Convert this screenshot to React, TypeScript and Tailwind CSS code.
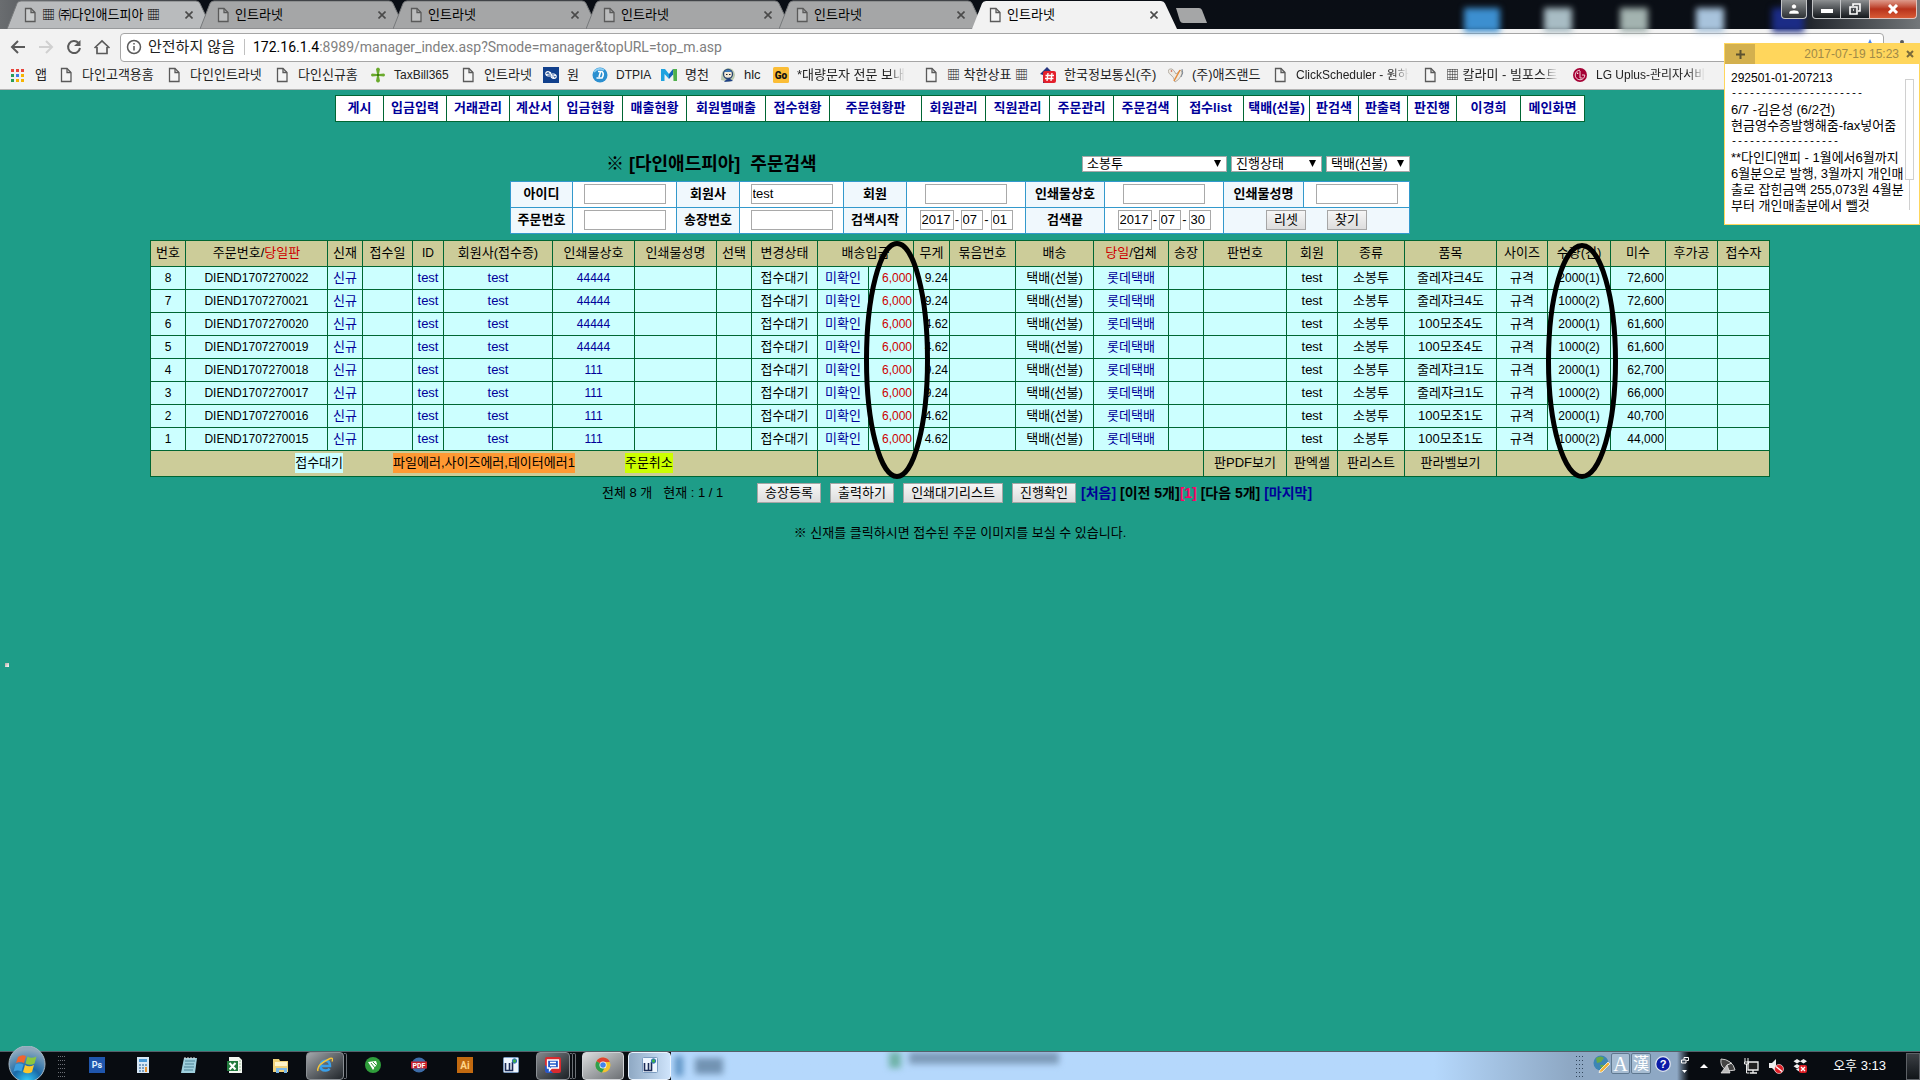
import { FunctionComponent, ReactNode } from "react";

const tabs = ["▦ ㈜다인애드피아 ▦", "인트라넷", "인트라넷", "인트라넷", "인트라넷", "인트라넷"];

const bookmarks = [
    { icon: "apps", label: "앱", width: 47 },
    { icon: "doc", label: "다인고객용홈", width: 108 },
    { icon: "doc", label: "다인인트라넷", width: 108 },
    { icon: "doc", label: "다인신규홈", width: 96 },
    { icon: "plus", label: "TaxBill365", width: 90, latin: true },
    { icon: "doc", label: "인트라넷", width: 83 },
    { icon: "wave", label: "원", width: 49 },
    { icon: "dtpia", label: "DTPIA", width: 69, latin: true },
    { icon: "m", label: "명천", width: 59 },
    { icon: "hlc", label: "hlc", width: 53 },
    { icon: "go", label: "*대량문자 전문 보내", width: 150, fade: true },
    { icon: "doc", label: "▦ 착한상표 ▦", width: 117 },
    { icon: "hash", label: "한국정보통신(주)", width: 128 },
    { icon: "bird", label: "(주)애즈랜드", width: 104 },
    { icon: "doc", label: "ClickScheduler - 원하", width: 150, latin: true, fade: true },
    { icon: "doc", label: "▦ 칼라미 - 빌포스트", width: 150, fade: true },
    { icon: "lg", label: "LG Uplus-관리자서비", width: 150, latin: true, fade: true },
];

const menus = [
    { label: "게시", width: 48 },
    { label: "입금입력", width: 63 },
    { label: "거래관리", width: 63 },
    { label: "계산서", width: 49 },
    { label: "입금현황", width: 64 },
    { label: "매출현황", width: 64 },
    { label: "회원별매출", width: 79 },
    { label: "접수현황", width: 64 },
    { label: "주문현황판", width: 92 },
    { label: "회원관리", width: 64 },
    { label: "직원관리", width: 64 },
    { label: "주문관리", width: 64 },
    { label: "주문검색", width: 64 },
    { label: "접수list", width: 66 },
    { label: "택배(선불)", width: 66 },
    { label: "판검색", width: 49 },
    { label: "판출력", width: 49 },
    { label: "판진행", width: 49 },
    { label: "이경희", width: 64 },
    { label: "메인화면", width: 64 },
];

const columns = [35, 142, 35, 50, 31, 109, 82, 82, 35, 66, 51, 45, 36, 66, 78, 75, 35, 83, 51, 67, 92, 51, 63, 55, 52, 52];
const searchColumns = [62, 104, 63, 104, 63, 119, 79, 119, 80, 106];

const orders = [
    { no: 8, code: "DIEND1707270022", name: "44444", weight: "9.24", item: "줄레쟈크4도", qty: "2000(1)", due: "72,600" },
    { no: 7, code: "DIEND1707270021", name: "44444", weight: "9.24", item: "줄레쟈크4도", qty: "1000(2)", due: "72,600" },
    { no: 6, code: "DIEND1707270020", name: "44444", weight: "4.62", item: "100모조4도", qty: "2000(1)", due: "61,600" },
    { no: 5, code: "DIEND1707270019", name: "44444", weight: "4.62", item: "100모조4도", qty: "1000(2)", due: "61,600" },
    { no: 4, code: "DIEND1707270018", name: "111", weight: "9.24", item: "줄레쟈크1도", qty: "2000(1)", due: "62,700" },
    { no: 3, code: "DIEND1707270017", name: "111", weight: "9.24", item: "줄레쟈크1도", qty: "1000(2)", due: "66,000" },
    { no: 2, code: "DIEND1707270016", name: "111", weight: "4.62", item: "100모조1도", qty: "2000(1)", due: "40,700" },
    { no: 1, code: "DIEND1707270015", name: "111", weight: "4.62", item: "100모조1도", qty: "1000(2)", due: "44,000" },
];

const DocIcon: FunctionComponent = () => (
    <svg viewBox="0 0 16 16" className="h-4 w-4 shrink-0" fill="#fff" fillOpacity=".25" stroke="#5a5a5a" strokeWidth="1.3">
        <path d="M3.5 1.5h5.5l4 4v9h-9.500z" />
        <path d="M9 1.500v4h4" fill="none" />
    </svg>
);

const BookmarkIcon: FunctionComponent<{ name: string }> = ({ name }) => {
    if (name === "doc") return <DocIcon />;
    return (
        <svg viewBox="0 0 16 16" className="h-4 w-4 shrink-0">
            {name === "apps" && (
                <g>
                    <path d="M0 2h3v3H0zM5 2h3v3H5zM10 2h3v3h-3z" fill="#e8453c" />
                    <path d="M0 7h3v3H0zM0 12h3v3H0z" fill="#2a9d57" />
                    <path d="M5 7h3v3H5z" fill="#3f7de8" />
                    <path d="M5 12h3v3H5zM10 7h3v3h-3zM10 12h3v3h-3z" fill="#f6b400" />
                </g>
            )}
            {name === "plus" && (
                <g fill="#6aaa2c">
                    <path d="M7 7L6 2Q8-1 10 2L9 7zM7 9l-1 5q2 3 4 0L9 9z" />
                    <path d="M7 7L2 6.500Q0 8 2 9.500L7 9zM9 7l5-.5q2 1.500 0 3L9 9z" />
                    <path d="M7 7h2v2H7z" fill="#3a7a14" />
                </g>
            )}
            {name === "wave" && (
                <g fill="none" stroke="#fff" strokeWidth="1.100">
                    <path d="M0 0h16v16H0z" fill="#11408c" stroke="none" />
                    <path d="M8 6Q5 3.500 3 5.500q-1 2.500 2 3.500h4q3 0 4-1M8 10q3 2.500 5 .5 1-2.500-2-3.500H7Q4 7 3 8M6 5l5 6" />
                </g>
            )}
            {name === "dtpia" && (
                <g>
                    <circle cx="8" cy="8" r="7.500" fill="#2b8fd0" />
                    <path d="M2 5q4-5 10-2" stroke="#8fd0f5" strokeWidth="1.500" fill="none" />
                    <path d="M6 4.500h4q2.500 2.500 0 6.500H4.500M8.500 5L7 10" stroke="#fff" strokeWidth="1.600" fill="none" />
                </g>
            )}
            {name === "m" && (
                <g>
                    <path d="M0 14V2h4l4 5v5L3.500 7v7z" fill="#1fa3e0" />
                    <path d="M8 7l4-5v5.500L8 12z" fill="#1463b8" />
                    <path d="M12 2h4v12h-3.500z" fill="#4fb04b" />
                </g>
            )}
            {name === "hlc" && (
                <g>
                    <path d="M1 13Q1 2 8 1q6 0 7 7-1 6-6 7z" fill="#b9c8b0" />
                    <circle cx="8" cy="7" r="4.500" fill="#f3ead8" stroke="#29446e" strokeWidth="1.300" />
                    <path d="M4 5q4-5 8 0z" fill="#3c7ab8" />
                    <path d="M4 15q4-6 9-1z" fill="#1d3f86" />
                    <path d="M6 7.500h1.500M9 7.500h1.500" stroke="#222" />
                </g>
            )}
            {name === "go" && (
                <g>
                    <rect width="16" height="16" rx="1.500" fill="#fbbd36" />
                    <text x="8" y="11.500" textAnchor="middle" fontSize="10" fontWeight="900" fontFamily="Roboto, sans-serif" fill="#111">Go</text>
                </g>
            )}
            {name === "hash" && (
                <g>
                    <path d="M0 7l7-7 5 5v11H3V8z" fill="#27357e" />
                    <rect x="3" y="4" width="13" height="12" rx="2" fill="#e3202c" />
                    <path d="M8 6L7 14M12 6l-1 8M5.500 8.500h8.500M5 11.500h8.500" stroke="#fff" strokeWidth="1.300" />
                </g>
            )}
            {name === "bird" && (
                <g fill="none">
                    <path d="M0 4q1-3 4-2 2 1 4 5l5-4q2 3 0 6-2 4-6 6-1-5-4-7-2-1-3-4z" fill="#eeeae2" stroke="#b5aea4" />
                    <path d="M6 14l6-11" stroke="#e58a3a" strokeWidth="1.500" />
                    <path d="M14 2q2 4-1 8" stroke="#7f8a96" />
                    <circle cx="3.500" cy="4" r=".8" fill="#c8452e" />
                </g>
            )}
            {name === "lg" && (
                <g>
                    <circle cx="8" cy="8" r="7" fill="#a50034" />
                    <path d="M8 4v7h2.500M8 3.200a4.800 4.800 0 1 0 4.800 4.800H10" stroke="#f3cfd9" fill="none" />
                    <circle cx="5.600" cy="6.300" r=".8" fill="#fff" />
                </g>
            )}
        </svg>
    );
};

const Tab: FunctionComponent<{ label: string; index: number }> = ({ label, index }) => {
    const active = index === 5;
    const fill = active ? "#f2f2f2" : index === 0 ? "#b9bbbd" : "#a5a6a7";
    return (
        <div className={active ? "relative z-10 h-full w-[193px]" : "relative h-full w-[193px]"}>
            <svg viewBox="0 0 206 29" className="absolute left-0 top-0 h-[29px] w-[206px]">
                <path d="M0 29L10 3.500Q11 1 14 1h175q3 0 4 2.500L205 29z" fill={fill} stroke={active ? "none" : "#77797b"} />
            </svg>
            <div className="relative flex h-full items-center pl-[15px]">
                <DocIcon />
                <span className="ml-1 w-[139px] whitespace-nowrap text-[13px] leading-4 text-black">{label}</span>
                <button aria-label="닫기" className="ml-1 h-2 w-2">
                    <svg viewBox="0 0 8 8" className="h-2 w-2" stroke="#4a4a4a" strokeWidth="1.600"><path d="M.5.500l7 7M7.500.500l-7 7" /></svg>
                </button>
            </div>
        </div>
    );
};

const BrowserHeader: FunctionComponent = () => (
    <header className="relative h-[90px] overflow-hidden border-b border-[#b4b4b4] bg-[#f2f2f2]">
        <div className="relative flex h-[29px] bg-linear-to-r from-[#6a6d70] via-[#0a0e15] via-10% to-[#0a0e15] pl-[7px]">
            <div className="absolute right-0 top-0 h-full w-36 bg-linear-to-r from-transparent to-[#73777a]"></div>
            <div className="absolute right-[116px] top-2 flex gap-x-12 blur-[3px]">
                <div className="-mr-1 h-6 w-9 bg-[#3c8fd0]"></div>
                <div className="h-6 w-7 bg-[#a8bcc4]"></div>
                <div className="h-6 w-7 bg-[#a3b3b0]"></div>
                <div className="h-6 w-7 bg-[#a8c3dc]"></div>
                <div className="h-6 w-8 bg-[#1b2c86]"></div>
            </div>
            {tabs.map((label, i) => <Tab key={i} label={label} index={i} />)}
            <button aria-label="새 탭" className="relative z-10 ml-[10px] mt-2 h-[15px] w-8">
                <svg viewBox="0 0 32 15" className="h-[15px] w-8"><path d="M1 0h23q2 0 3 2l5 13H8q-2 0-3-2z" fill="#a5a6a7" /></svg>
            </button>
            <div className="absolute right-[3px] top-0 flex h-[19px]">
                <button aria-label="사용자" className="mr-[5px] flex w-[26px] items-center justify-center rounded-b border border-t-0 border-[#c3c5c7] bg-linear-to-b from-[#8d9092] to-[#2e3236]">
                    <svg viewBox="0 0 12 12" className="h-3 w-3" fill="#fff" stroke="#333" strokeWidth=".5"><circle cx="6" cy="3.500" r="2.500" /><path d="M1 11V9q1-2 5-2t5 2v2z" /></svg>
                </button>
                <button aria-label="최소화" className="flex w-[29px] items-center justify-center rounded-bl border border-t-0 border-[#c3c5c7] bg-linear-to-b from-[#8d9092] to-[#15191d]">
                    <span className="mt-1 h-1 w-3 bg-white"></span>
                </button>
                <button aria-label="이전 크기로" className="flex w-[28px] items-center justify-center border-b border-[#c3c5c7] bg-linear-to-b from-[#8d9092] to-[#15191d]">
                    <svg viewBox="0 0 12 12" className="h-3 w-3" fill="none" stroke="#fff" strokeWidth="1.600"><path d="M4 3V1h7v7H9M1 4h7v7H1zM4 7h1" /></svg>
                </button>
                <button aria-label="닫기" className="flex w-[48px] items-center justify-center rounded-br border border-t-0 border-[#e0c3bd] bg-linear-to-b from-[#dd9a8b] via-[#b8321b] to-[#d85a35]">
                    <svg viewBox="0 0 12 10" className="h-[10px] w-3" stroke="#fff" strokeWidth="3"><path d="M2 1l8 8M10 1L2 9" /></svg>
                </button>
            </div>
        </div>
        <div className="flex h-[36px] items-center pl-[10px] pr-2">
            <svg viewBox="0 0 102 18" className="h-[18px] w-[102px] shrink-0" fill="none" stroke="#5a5a5a" strokeWidth="2">
                <path d="M15 9H2M8 3L2 9l6 6" />
                <path d="M29 9h13M36 3l6 6-6 6" stroke="#d0d0d0" />
                <path d="M68.500 5A6 6 0 1 0 70 10" />
                <path d="M70.500 2v6H64z" fill="#5a5a5a" stroke="none" />
                <path d="M84.500 10L92 3l7.500 7M87 9v6.500h10V9" strokeWidth="1.700" />
            </svg>
            <div className="ml-2 flex h-[29px] flex-1 items-center rounded-sm border border-[#a6a6a6] bg-white pl-[5px]">
                <svg viewBox="0 0 16 16" className="h-4 w-4" fill="none" stroke="#5a5a5a" strokeWidth="1.500"><circle cx="8" cy="8" r="6.500" /><path d="M8 7v4.500M8 4v1.500" /></svg>
                <span className="ml-[6px] w-[91px] whitespace-nowrap text-[15px] leading-5 text-[#222]">안전하지 않음</span>
                <span className="ml-[5px] h-4 w-px bg-[#c0c0c0]"></span>
                <p className="ml-2 whitespace-nowrap font-[Roboto,sans-serif] text-[14px] leading-5 text-[#808080]"><span className="text-black">172.16.1.4</span>:8989/manager_index.asp?Smode=manager&amp;topURL=top_m.asp</p>
                <svg viewBox="0 0 16 16" className="ml-auto mr-[5px] h-4 w-4" fill="#4a86e8"><path d="M8 0l2.500 5.500 5.500.5-4 4 1 6-5-3-5 3 1-6-4-4 5.500-.5z" /></svg>
            </div>
            <svg viewBox="0 0 4 14" className="ml-4 mr-2 h-[14px] w-1" fill="#5a5a5a"><circle cx="2" cy="2" r="2" /><circle cx="2" cy="7" r="2" /><circle cx="2" cy="12" r="2" /></svg>
        </div>
        <nav className="flex h-5 items-center pl-[11px]">
            {bookmarks.map((b, i) => (
                <a key={i} href="#" style={{ width: b.width }} className="flex shrink-0 items-center gap-x-2 text-[#222]">
                    <BookmarkIcon name={b.icon} />
                    <span className={"whitespace-nowrap leading-4 " + (b.latin ? "text-[12px] " : "text-[13px] ") + (b.fade ? "mask-r-from-85%" : "")}>{b.label}</span>
                </a>
            ))}
        </nav>
    </header>
);

const Th: FunctionComponent<{ children?: ReactNode; span?: number }> = ({ children, span }) => (
    <th colSpan={span} className="whitespace-nowrap border border-[#006633] pb-[2px] font-normal">{children}</th>
);

const Td: FunctionComponent<{ children?: ReactNode; className?: string }> = ({ children, className }) => (
    <td className={"whitespace-nowrap border border-[#006633] " + (className || "")}>{children}</td>
);

const Select: FunctionComponent<{ label: string; value: string; className: string }> = ({ label, value, className }) => (
    <div className={"relative h-4 " + className}>
        <select aria-label={label} className="block h-4 w-full appearance-none border border-[#a9a9a9] bg-white pl-1 text-[13px] leading-[14px]">
            <option>{value}</option>
        </select>
        <svg viewBox="0 0 7 7" className="pointer-events-none absolute right-[6px] top-1 h-[7px] w-[7px]"><path d="M0 0h7L3.500 7z" /></svg>
    </div>
);

const Field: FunctionComponent<{ id: string; label: string; value?: string }> = ({ id, label, value }) => (
    <>
        <th className="border border-[#3399cc] bg-[#f0f8fd] pb-[2px] font-bold"><label htmlFor={id}>{label}</label></th>
        <td className="border border-[#3399cc] bg-white pb-[2px]">
            <input id={id} defaultValue={value} className="mx-auto block h-5 w-[82px] border border-[#a9a9a9] bg-white px-px text-[13px]" />
        </td>
    </>
);

const DateField: FunctionComponent<{ id: string; label: string; day: string }> = ({ id, label, day }) => (
    <>
        <th className="border border-[#3399cc] bg-[#f0f8fd] pb-[2px] font-bold"><label htmlFor={id}>{label}</label></th>
        <td className="border border-[#3399cc] bg-white pb-[2px]">
            <div className="flex items-center justify-center text-[13px]">
                <input id={id} defaultValue="2017" className="h-5 w-[34px] border border-[#a9a9a9] px-px" />
                <span className="w-[7px] text-center">-</span>
                <input aria-label="월" defaultValue="07" className="h-5 w-[22px] border border-[#a9a9a9] px-px" />
                <span className="w-[8px] text-center">-</span>
                <input aria-label="일" defaultValue={day} className="h-5 w-[22px] border border-[#a9a9a9] px-px" />
            </div>
        </td>
    </>
);

const Button: FunctionComponent<{ children: ReactNode; className: string }> = ({ children, className }) => (
    <button className={"h-5 whitespace-nowrap border border-[#a6a6a6] bg-linear-to-b from-[#f6f6f6] to-[#dddddd] text-[13px] leading-4 text-black " + className}>{children}</button>
);

const SearchForm: FunctionComponent = () => (
    <form className="mx-auto mt-[34px] w-[900px]">
        <div className="flex h-4 items-center">
            <h1 className="ml-[96px] whitespace-pre text-[18px] font-bold leading-5">※ [다인애드피아]  주문검색</h1>
            <div className="ml-auto flex gap-x-1">
                <Select label="종류" value="소봉투" className="w-[145px]" />
                <Select label="진행상태" value="진행상태" className="w-[91px]" />
                <Select label="배송" value="택배(선불)" className="w-[84px]" />
            </div>
        </div>
        <table className="mt-[9px] w-[900px] table-fixed border-collapse text-[13px] leading-4">
            <colgroup>{searchColumns.map((w, i) => <col key={i} style={{ width: w }} />)}</colgroup>
            <tbody>
                <tr className="h-[26px]">
                    <Field id="uid" label="아이디" />
                    <Field id="company" label="회원사" value="test" />
                    <Field id="member" label="회원" />
                    <Field id="shop" label="인쇄물상호" />
                    <Field id="person" label="인쇄물성명" />
                </tr>
                <tr className="h-[26px]">
                    <Field id="orderNo" label="주문번호" />
                    <Field id="invoice" label="송장번호" />
                    <DateField id="from" label="검색시작" day="01" />
                    <DateField id="to" label="검색끝" day="30" />
                    <td colSpan={2} className="border border-[#3399cc] bg-[#f0f8fd] pb-[2px]">
                        <div className="flex justify-center gap-x-[21px]">
                            <Button className="w-10">리셋</Button>
                            <Button className="w-10">찾기</Button>
                        </div>
                    </td>
                </tr>
            </tbody>
        </table>
    </form>
);

const OrderTable: FunctionComponent = () => (
    <div className="relative mx-auto mt-[6px] w-[1620px]">
        <table className="w-full table-fixed border-collapse bg-[#cccc99] text-center text-[13px] leading-4">
            <colgroup>{columns.map((w, i) => <col key={i} style={{ width: w }} />)}</colgroup>
            <thead>
                <tr className="h-[26px]">
                    <Th>번호</Th>
                    <Th>주문번호/<span className="text-[#cc0000]">당일판</span></Th>
                    <Th>신재</Th>
                    <Th>접수일</Th>
                    <Th><span className="text-[12px]">ID</span></Th>
                    <Th>회원사(접수증)</Th>
                    <Th>인쇄물상호</Th>
                    <Th>인쇄물성명</Th>
                    <Th>선택</Th>
                    <Th>변경상태</Th>
                    <Th span={2}>배송입금</Th>
                    <Th>무게</Th>
                    <Th>묶음번호</Th>
                    <Th>배송</Th>
                    <Th><span className="text-[#cc0000]">당일</span>/업체</Th>
                    <Th>송장</Th>
                    <Th>판번호</Th>
                    <Th>회원</Th>
                    <Th>종류</Th>
                    <Th>품목</Th>
                    <Th>사이즈</Th>
                    <Th>수량(건)</Th>
                    <Th>미수</Th>
                    <Th>후가공</Th>
                    <Th>접수자</Th>
                </tr>
            </thead>
            <tbody className="bg-[#ccffff]">
                {orders.map((o) => (
                    <tr key={o.no} className="h-[23px]">
                        <Td className="text-[12px]">{o.no}</Td>
                        <Td className="text-[12px]">{o.code}</Td>
                        <Td className="text-[#000099]"><a href="#">신규</a></Td>
                        <Td />
                        <Td className="text-[#000099]"><a href="#">test</a></Td>
                        <Td className="text-[#000099]"><a href="#">test</a></Td>
                        <Td className="text-[12px] text-[#000099]"><a href="#">{o.name}</a></Td>
                        <Td />
                        <Td />
                        <Td>접수대기</Td>
                        <Td className="text-[#000099]"><a href="#">미확인</a></Td>
                        <Td className="pr-px text-right text-[12px] text-[#cc0000]">6,000</Td>
                        <Td className="pr-px text-right text-[12px]">{o.weight}</Td>
                        <Td />
                        <Td>택배(선불)</Td>
                        <Td className="text-[#000099]"><a href="#">롯데택배</a></Td>
                        <Td />
                        <Td />
                        <Td>test</Td>
                        <Td>소봉투</Td>
                        <Td>{o.item}</Td>
                        <Td>규격</Td>
                        <Td className="text-[12px]">{o.qty}</Td>
                        <Td className="pr-px text-right text-[12px]">{o.due}</Td>
                        <Td />
                        <Td />
                    </tr>
                ))}
            </tbody>
            <tfoot>
                <tr className="h-[26px]">
                    <td colSpan={10} className="border border-[#006633] pb-[2px]">
                        <div className="flex justify-center gap-x-[50px] leading-5">
                            <span className="bg-[#ccffff]">접수대기</span>
                            <span className="bg-[#ff9933]">파일에러,사이즈에러,데이터에러1</span>
                            <span className="bg-[#ccff00]">주문취소</span>
                        </div>
                    </td>
                    <td colSpan={7} className="border border-[#006633]"></td>
                    <Td className="pb-[2px]">판PDF보기</Td>
                    <Td className="pb-[2px]">판엑셀</Td>
                    <Td className="pb-[2px]">판리스트</Td>
                    <Td className="pb-[2px]">판라벨보기</Td>
                    <td colSpan={5} className="border border-[#006633]"></td>
                </tr>
            </tfoot>
        </table>
        {/* pen marks over 배송입금 and 수량 */}
        <svg viewBox="0 0 66 238" className="pointer-events-none absolute left-[714px] top-px h-[238px] w-[66px]">
            <ellipse cx="33" cy="119" rx="30.500" ry="116.500" fill="none" stroke="#000" strokeWidth="5" />
        </svg>
        <svg viewBox="0 0 72 236" className="pointer-events-none absolute left-[1396px] top-[3px] h-[236px] w-[72px]">
            <ellipse cx="36" cy="118" rx="33.500" ry="115.500" fill="none" stroke="#000" strokeWidth="5" />
        </svg>
    </div>
);

const Memo: FunctionComponent = () => (
    <aside className="absolute right-0 top-[43px] z-20 h-[182px] w-[196px] border border-[#ffd65c] bg-white text-black">
        <div className="flex h-5 items-center bg-[#ffd65c]">
            <button aria-label="새 메모" className="flex h-5 w-[30px] items-center justify-center bg-[#d3b04e]">
                <svg viewBox="0 0 9 9" className="h-[9px] w-[9px]" stroke="#5d5230" strokeWidth="2"><path d="M4.500 0v9M0 4.500h9" /></svg>
            </button>
            <span className="ml-auto text-[12px] leading-4 text-[#a08a48]">2017-07-19 15:23</span>
            <button aria-label="닫기" className="ml-[7px] mr-[5px] h-2 w-2">
                <svg viewBox="0 0 8 8" className="h-2 w-2" stroke="#7a6a3a" strokeWidth="2"><path d="M1 1l6 6M7 1L1 7" /></svg>
            </button>
        </div>
        <div className="whitespace-pre pl-[6px] pt-[6px] text-[13px] leading-4">
            <p className="text-[12px] leading-4">292501-01-207213</p>
            <p className="font-['Liberation_Mono',monospace] text-[10px] leading-4">----------------------</p>
            <p>6/7 -김은성 (6/2건)</p>
            <p>현금영수증발행해줌-fax넣어줌</p>
            <p className="font-['Liberation_Mono',monospace] text-[10px] leading-4">------------------</p>
            <p>**다인디앤피 - 1월에서6월까지</p>
            <p>6월분으로 발행, 3월까지 개인매</p>
            <p>출로 잡힌금액 255,073원 4월분</p>
            <p>부터 개인매출분에서 뺄것</p>
        </div>
        <div className="absolute right-[5px] top-[35px] h-[101px] w-[9px] border border-[#d0d0d0]"></div>
        <div className="absolute right-[9px] top-[136px] h-[30px] w-px bg-[#d0d0d0]"></div>
    </aside>
);

const TaskIcon: FunctionComponent<{ children: ReactNode; className?: string }> = ({ children, className }) => (
    <button aria-label="프로그램" className={"flex h-[28px] shrink-0 items-center justify-center pb-[2px] " + (className || "w-[46px]")}>
        <svg viewBox="0 0 16 16" className="h-4 w-4">{children}</svg>
    </button>
);

const UiGlyph: FunctionComponent = () => (
    <g>
        <rect x=".5" y=".5" width="15" height="15" rx="1" fill="#eef6ff" stroke="#7c9cc0" />
        <path d="M2.500 6v7.500h4V6M6.500 13.500h3V5" fill="none" stroke="#1b2b55" strokeWidth="1.600" />
        <circle cx="11.500" cy="4" r="2.200" fill="#3fae49" stroke="#2d6bc4" />
    </g>
);

const Taskbar: FunctionComponent = () => (
    <footer className="relative flex h-[29px] items-center border-t border-[#55606a] bg-[#080c11]">
        <button aria-label="시작" className="absolute -top-[6px] left-2 h-[35px] w-[38px]">
            <svg viewBox="0 0 38 35" className="h-[35px] w-[38px]">
                <defs>
                    <radialGradient id="orb" cx=".5" cy="1" r=".9">
                        <stop offset="0" stopColor="#35d2ff" />
                        <stop offset=".45" stopColor="#1a69a8" />
                        <stop offset="1" stopColor="#8ea9bd" />
                    </radialGradient>
                </defs>
                <circle cx="19" cy="18" r="18" fill="url(#orb)" stroke="#a7b8c4" />
                <path d="M10 11q4-3 8-1l-2 7q-4-2-8 0z" fill="#f0652f" />
                <path d="M19.500 10.500q4 2.500 9 0l-2 7q-4 2.500-9 0z" fill="#8cc63f" />
                <path d="M7.500 18.500q4-2 8 0l-2 7q-4-2-8 0z" fill="#3d9fe0" />
                <path d="M17 19q4 2.500 9 0l-2 7q-4 2.500-9 0z" fill="#fcc62c" />
            </svg>
        </button>
        <svg viewBox="0 0 8 21" className="ml-[58px] h-[21px] w-2" fill="#6c7076">
            {[0, 4, 8, 12, 16, 20].map((y) => <path key={y} d={`M0 ${y}h1v1H0zM2 ${y}h1v1H2zM4 ${y}h1v1H4zM6 ${y}h1v1H6z`} />)}
        </svg>
        <div className="ml-[8px] flex h-full items-center">
            <TaskIcon>
                <rect width="16" height="16" fill="#1f56ad" /><text x="8" y="11" textAnchor="middle" fontSize="9" fontWeight="700" fontFamily="Roboto, sans-serif" fill="#dff0ff">Ps</text>
            </TaskIcon>
            <TaskIcon>
                <path d="M2 0h12v16H2z" fill="#d7e7f5" /><path d="M4 2h8v3H4z" fill="#4a9ad8" /><path d="M4 7h2v2H4zM7 7h2v2H7zM10 7h2v2h-2zM4 10h2v2H4zM7 10h2v2H7zM4 13h2v2H4zM7 13h2v2H7z" fill="#7b9fc0" /><path d="M10 10h2v5h-2z" fill="#e8912d" />
            </TaskIcon>
            <TaskIcon>
                <path d="M3 1h13l-2 15H0z" fill="#9fd0de" /><path d="M4 4h10M4 7h9M3 10h10M3 13h9" stroke="#4d8396" /><path d="M4 0v2M7 0v2M10 0v2M13 0v2" stroke="#ddd" />
            </TaskIcon>
            <TaskIcon>
                <path d="M2 0h10l3 3v13H2z" fill="#f2f7f1" /><path d="M12 4h2M12 7h2M12 10h2M12 13h2" stroke="#9dbb9a" /><rect x="0" y="4" width="11" height="10" fill="#217a3c" /><path d="M2.500 6l6 6.500M8.500 6l-6 6.500" stroke="#fff" strokeWidth="2" />
            </TaskIcon>
            <TaskIcon>
                <path d="M0 2h6l1 2h8v11H0z" fill="#f0d27a" /><path d="M2 5h12v4H2z" fill="#fff4c8" /><path d="M3 16v-5h11v5h-3v-3H6v3z" fill="#7ab8e8" />
            </TaskIcon>
            <TaskIcon className="ml-[2px] w-[38px] rounded-sm border border-[#8a8f94] bg-linear-to-br from-[#a4a8ac] to-[#22272c]">
                <path d="M3.500 9h9.500q0-5-4.500-5.200T3.500 9q0 4.500 5 4.500 3 0 4-2" fill="none" stroke="#3aa0ea" strokeWidth="2.500" /><path d="M1 14Q-1 8 13 1.500q4-1 2 3" fill="none" stroke="#f4c33a" strokeWidth="1.500" />
            </TaskIcon>
            <span className="mr-[3px] h-[26px] w-[3px] rounded-r-xs border border-l-0 border-[#6b7076]"></span>
            <TaskIcon>
                <circle cx="8" cy="8" r="8" fill="#2f9e3b" /><path d="M3 5l8-1 1 3-4 6z" fill="#fff" /><path d="M6 6l4 5M8 5l3 3" stroke="#2f9e3b" />
            </TaskIcon>
            <TaskIcon>
                <circle cx="8" cy="8" r="7.500" fill="#3c6ca8" /><rect x="0" y="4.500" width="16" height="7" fill="#c7202a" /><text x="8" y="10.500" textAnchor="middle" fontSize="7" fontWeight="700" fontFamily="Roboto, sans-serif" fill="#fff">PDF</text>
            </TaskIcon>
            <TaskIcon>
                <rect width="16" height="16" fill="#c26a10" /><text x="8" y="11.500" textAnchor="middle" fontSize="10" fontWeight="700" fontFamily="Roboto, sans-serif" fill="#ffd58a">Ai</text>
            </TaskIcon>
            <TaskIcon><UiGlyph /></TaskIcon>
            <TaskIcon className="ml-[2px] w-[34px] rounded-sm border border-[#8a8f94] bg-linear-to-br from-[#85898d] to-[#1c2126]">
                <rect width="16" height="16" rx="2" fill="#d92b2f" /><path d="M0 8l8 8H2q-2 0-2-2z" fill="#2458c8" /><path d="M2.500 3h11v8h-7l-2 2.500V11h-2z" fill="#2458c8" stroke="#fff" strokeWidth="1.300" /><path d="M5 5.500h6M5 8.500h6" stroke="#fff" strokeWidth="1.300" />
            </TaskIcon>
            <span className="h-[26px] w-[3px] rounded-r-xs border border-l-0 border-[#6b7076]"></span>
            <span className="mr-[6px] h-[26px] w-[3px] rounded-r-xs border border-l-0 border-[#6b7076]"></span>
            <TaskIcon className="w-[42px] rounded-sm border border-[#d0d3d6] bg-linear-to-br from-[#dcdedf] to-[#6c7074]">
                <circle cx="8" cy="8" r="7.500" fill="#f2c230" /><path d="M8 8L1.500 4.200A7.500 7.500 0 0 1 14.800 5H8z" fill="#dd4332" /><path d="M8 8l-6.500-3.800A7.500 7.500 0 0 0 7 15.400L10 10z" fill="#2f9e4f" /><circle cx="8" cy="8" r="3.500" fill="#fff" /><circle cx="8" cy="8" r="2.800" fill="#4384ec" />
            </TaskIcon>
            <TaskIcon className="ml-1 w-[43px] rounded-sm border border-[#eaf4ff] bg-linear-to-r from-[#8fa9c4] to-[#cfe4fb]"><UiGlyph /></TaskIcon>
        </div>
        <div className="relative h-full flex-1 overflow-hidden bg-linear-to-r from-[#b5d8fc] via-[#b5d8fc] via-85% to-[#8ea8c4]">
            <div className="absolute left-1 top-1 flex items-center gap-x-3 blur-[3px]">
                <span className="h-5 w-2 bg-[#5e93c4]"></span>
                <span className="h-4 w-7 bg-[#7293b3]"></span>
            </div>
            <div className="absolute left-[218px] top-0 flex gap-x-2 blur-[3px]">
                <span className="h-4 w-3 bg-[#6fb3a8]"></span>
                <span className="h-3 w-[150px] bg-[#7c9ab8]"></span>
            </div>
        </div>
        <div className="flex h-full w-[120px] shrink-0 items-center bg-linear-to-r from-[#8ea8c4] from-90% to-[#080c11] pl-[7px]">
            <svg viewBox="0 0 9 21" className="h-[21px] w-[9px]" fill="#33475c">
                {[0, 4, 8, 12, 16, 20].map((y) => <path key={y} d={`M0 ${y}h1v1H0zM3 ${y}h1v1H3zM6 ${y}h1v1H6z`} />)}
            </svg>
            <svg viewBox="0 0 18 18" className="ml-2 mb-1 h-[18px] w-[18px]">
                <circle cx="8" cy="8" r="7.500" fill="#3c86b4" /><path d="M3 3q5-3 8 0l-3 4-4 1zM7 10l5 0-3 5z" fill="#66a84a" /><path d="M7 15l8-8 2 2-8 8-3 .5z" fill="#f3b43a" stroke="#fff" strokeWidth=".7" />
            </svg>
            <button className="mb-[5px] h-[21px] w-[19px] rounded-xs border border-[#5f7890] bg-[#a7bdd3] font-['Liberation_Serif',serif] text-[20px] leading-[18px] text-white">A</button>
            <button className="mb-[5px] ml-px h-[21px] w-[20px] rounded-xs border border-[#5f7890] bg-[#a7bdd3] text-[16px] leading-[18px] text-white">漢</button>
            <svg viewBox="0 0 16 16" className="mb-1 ml-1 h-4 w-4 shrink-0">
                <circle cx="8" cy="8" r="7.300" fill="#0a1ba8" stroke="#dfe5ee" strokeWidth="1.300" /><text x="8" y="12" textAnchor="middle" fontSize="11" fontWeight="700" fill="#fff">?</text>
            </svg>
            <svg viewBox="0 0 8 18" className="ml-[10px] h-[18px] w-2 shrink-0" fill="none" stroke="#fff"><path d="M3 3V.5h4.500v3H5.500M.5 3h4.500v3H.5z" /><path d="M1 13h5l-2.500 3z" fill="#fff" stroke="none" /></svg>
        </div>
        <div className="flex h-full w-[231px] shrink-0 items-center bg-[#080c11] pl-[11px]">
            <svg viewBox="0 0 110 18" className="h-[18px] w-[110px]">
                <path d="M0 11l4-4 4 4z" fill="#fff" />
                <path d="M21 2q-1 7 4 10 5 3 10 1-1-5-5-8-4-3-9-3z" fill="#444" stroke="#ccc" /><path d="M27 8l-6 8h9z" fill="#bbb" stroke="#eee" strokeWidth=".7" /><path d="M27 8l5-2" stroke="#eee" />
                <path d="M48 5h10v8H48zM50 16h7M53 13v3" fill="#222" stroke="#eee" strokeWidth="1.300" /><path d="M45 1v4M48 1v4M44.500 5h4v2h-4zM46.500 7v9h3" fill="none" stroke="#eee" />
                <path d="M69 6h3l4-4v13l-4-4h-3z" fill="#eee" /><circle cx="79" cy="12" r="4.500" fill="#dd1f26" stroke="#fff" strokeWidth=".6" /><path d="M76 9.500l6 5" stroke="#fff" strokeWidth="1.300" />
                <path d="M97 2l3.500 2.300L97 6.600l-3.500-2.300zM103.500 2l3.500 2.300-3.500 2.300L100 4.300zM97 7l3.500 2.300-3.500 2.300-3.500-2.300zM96 12.500l4-2 4 2-4 2.500z" fill="#eee" /><rect x="99" y="8" width="8" height="8" rx="2" fill="#dd1f26" /><path d="M101 10l4 4M105 10l-4 4" stroke="#fff" strokeWidth="1.300" />
            </svg>
            <span className="ml-auto whitespace-nowrap text-[13px] leading-4 text-white">오후 3:13</span>
            <button aria-label="바탕 화면 보기" className="ml-5 h-[27px] w-[14px] border border-[#5d6166] bg-linear-to-b from-[#3c4045] to-[#111519]"></button>
        </div>
    </footer>
);

const App: FunctionComponent = () => {
    return (
        <div className="relative flex min-h-screen flex-col bg-[#1e9d88] font-['Liberation_Sans','Noto_Sans_CJK_KR',sans-serif] text-black">
            <BrowserHeader />
            <Memo />
            <main className="flex-1">
                <table className="mx-auto mt-[5px] w-[1250px] table-fixed border-collapse bg-white text-center text-[13px] font-bold leading-4 text-[#000099]">
                    <colgroup>{menus.map((m) => <col key={m.label} style={{ width: m.width }} />)}</colgroup>
                    <tbody>
                        <tr className="h-[26px]">
                            {menus.map((m) => <td key={m.label} className="whitespace-nowrap border border-[#006633] pb-[2px]"><a href="#">{m.label}</a></td>)}
                        </tr>
                    </tbody>
                </table>
                <SearchForm />
                <OrderTable />
                <div className="mx-auto mt-[6px] flex w-[716px] items-center whitespace-pre text-[13px] leading-5">
                    <p className="w-[155px]">전체 8 개   현재 : 1 / 1</p>
                    <Button className="w-16">송장등록</Button>
                    <Button className="ml-[9px] w-16">출력하기</Button>
                    <Button className="ml-[9px] w-[100px]">인쇄대기리스트</Button>
                    <Button className="ml-[9px] w-16">진행확인</Button>
                    <div className="ml-[5px] text-[14px] font-bold leading-5">
                        <a href="#" className="text-[#000099]">[처음]</a> [이전 5개]<span className="text-[#ff0066]">[1]</span> [다음 5개] <a href="#" className="text-[#000099]">[마지막]</a>
                    </div>
                </div>
                <p className="mt-5 text-center text-[13px] leading-5">※ 신재를 클릭하시면 접수된 주문 이미지를 보실 수 있습니다.</p>
                <div className="ml-[5px] mt-[120px] h-1 w-1 bg-linear-to-br from-[#b4a8a4] to-white"></div>
            </main>
            <Taskbar />
        </div>
    );
}

export default App;
